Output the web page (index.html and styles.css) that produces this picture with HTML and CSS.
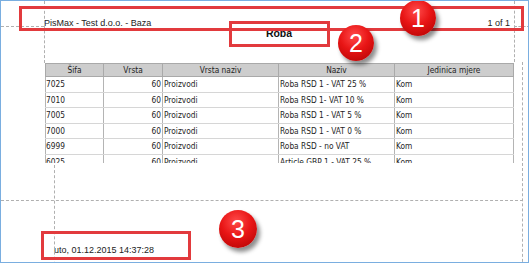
FILE: index.html
```html
<!DOCTYPE html>
<html lang="hr">
<head>
<meta charset="utf-8">
<title>Roba - pregled</title>
<link rel="stylesheet" href="styles.css">
</head>
<body>
<div class="frame">
  <div class="report">
    <div class="page-head">
      <span class="company">PisMax - Test d.o.o. - Baza</span>
      <span class="pages">1 of 1</span>
    </div>
    <div class="title">Roba</div>
    <div class="table-clip">
      <table class="grid">
        <colgroup>
          <col class="c1"><col class="c2"><col class="c3"><col class="c4"><col class="c5">
        </colgroup>
        <thead>
          <tr><th>Šifa</th><th>Vrsta</th><th>Vrsta naziv</th><th>Naziv</th><th>Jedinica mjere</th></tr>
        </thead>
        <tbody>
          <tr><td>7025</td><td class="num">60</td><td>Proizvodi</td><td>Roba RSD 1 - VAT 25 %</td><td>Kom</td></tr>
          <tr><td>7010</td><td class="num">60</td><td>Proizvodi</td><td>Roba RSD 1- VAT 10 %</td><td>Kom</td></tr>
          <tr><td>7005</td><td class="num">60</td><td>Proizvodi</td><td>Roba RSD 1 - VAT 5 %</td><td>Kom</td></tr>
          <tr><td>7000</td><td class="num">60</td><td>Proizvodi</td><td>Roba RSD 1 - VAT 0 %</td><td>Kom</td></tr>
          <tr><td>6999</td><td class="num">60</td><td>Proizvodi</td><td>Roba RSD - no VAT</td><td>Kom</td></tr>
          <tr><td>6025</td><td class="num">60</td><td>Proizvodi</td><td>Article GBP 1 - VAT 25 %</td><td>Kom</td></tr>
        </tbody>
      </table>
    </div>
    <div class="page-foot">uto, 01.12.2015 14:37:28</div>
  </div>

  <div class="guide h g-h1"></div>
  <div class="guide h g-h2"></div>
  <div class="guide h g-h3"></div>
  <div class="guide v g-v1"></div>
  <div class="guide v g-v2"></div>
  <div class="guide v g-v3"></div>
  <div class="guide v g-v4"></div>

  <div class="mark m1"></div>
  <div class="mark m2"></div>
  <div class="mark m3"></div>

  <div class="badge b1">1</div>
  <div class="badge b2">2</div>
  <div class="badge b3">3</div>
</div>
</body>
</html>
```

FILE: styles.css
```css
html, body {
  margin: 0;
  padding: 0;
  background: #ffffff;
}

.frame {
  position: relative;
  width: 529px;
  height: 263px;
  box-sizing: border-box;
  border: 1px solid #7aaee0;
  background: #ffffff;
  overflow: hidden;
  font-family: "Liberation Sans", Arial, sans-serif;
  color: #222222;
}

.report {
  margin-left: 43px;
  width: 470px;
  padding-top: 17px;
}

.page-head {
  display: flex;
  justify-content: space-between;
  font-size: 9px;
  line-height: 10px;
  padding-right: 4px;
}

.title {
  text-align: center;
  font-weight: bold;
  font-size: 10.5px;
  line-height: 11px;
  color: #111111;
}

.table-clip {
  margin-top: 24px;
  margin-left: 1px;
  height: 100px;
  overflow: hidden;
}

.grid {
  border-collapse: collapse;
  table-layout: fixed;
  width: 468px;
  font-family: "DejaVu Sans Condensed", "Liberation Sans", sans-serif;
  font-size: 8.3px;
  color: #1e1e1e;
}

.c1 { width: 58px; }
.c2 { width: 59px; }
.c3 { width: 116px; }
.c4 { width: 116px; }
.c5 { width: 119px; }

.grid th {
  background: #cdcdcd;
  border: 1px solid #a9a9a9;
  font-weight: normal;
  height: 12px;
  padding: 0;
  line-height: 12px;
  text-align: center;
}

.grid td {
  height: 14.5px;
  padding: 0 1px;
  line-height: 12px;
  vertical-align: middle;
  border-left: 1px solid #b4b4b4;
  border-right: 1px solid #b4b4b4;
  border-bottom: 1px solid #d6d6d6;
  white-space: nowrap;
  overflow: hidden;
}

.grid td:first-child {
  padding-left: 0;
}

.grid td.num {
  text-align: right;
}

.page-foot {
  margin-top: 82px;
  margin-left: 10px;
  font-size: 9px;
  line-height: 10px;
}

/* print-preview margin guides */
.guide {
  position: absolute;
}
.guide.h {
  height: 0;
  border-top: 1px dashed #b0b0b0;
}
.guide.v {
  width: 0;
  border-left: 1px dashed #b0b0b0;
}
.g-h1 { top: 25px; left: 0; width: 43px; }
.g-h2 { top: 25px; left: 513px; width: 16px; }
.g-h3 { top: 199px; left: 0; width: 522px; }
.g-v1 { left: 43px; top: 0; height: 62px; }
.g-v2 { left: 513px; top: 0; height: 61px; }
.g-v3 { left: 521px; top: 61px; height: 210px; }
.g-v4 { left: 53px; top: 164px; height: 110px; }

/* annotation boxes */
.mark {
  position: absolute;
  border: 3px solid #e23a3d;
  box-sizing: border-box;
}
.m1 { left: 18px; top: 5px; width: 505px; height: 25px; }
.m2 { left: 228px; top: 20px; width: 101px; height: 26px; }
.m3 { left: 40px; top: 230px; width: 150px; height: 29px; }

/* numbered callouts */
.badge {
  position: absolute;
  width: 36px;
  height: 36px;
  border-radius: 50%;
  background: radial-gradient(circle at 45% 30%, #ff4a4a 0%, #e81515 45%, #c20808 80%, #9e0000 100%);
  box-shadow: 3px 4px 4px rgba(0, 0, 0, 0.45);
  color: #ffffff;
  font-family: "Liberation Sans", Arial, sans-serif;
  font-size: 25px;
  line-height: 36px;
  text-align: center;
}
.b1 { left: 399px; top: -1px; }
.b2 { left: 337px; top: 24px; }
.b3 { left: 218px; top: 209px; width: 38px; height: 38px; line-height: 38px; }
```
